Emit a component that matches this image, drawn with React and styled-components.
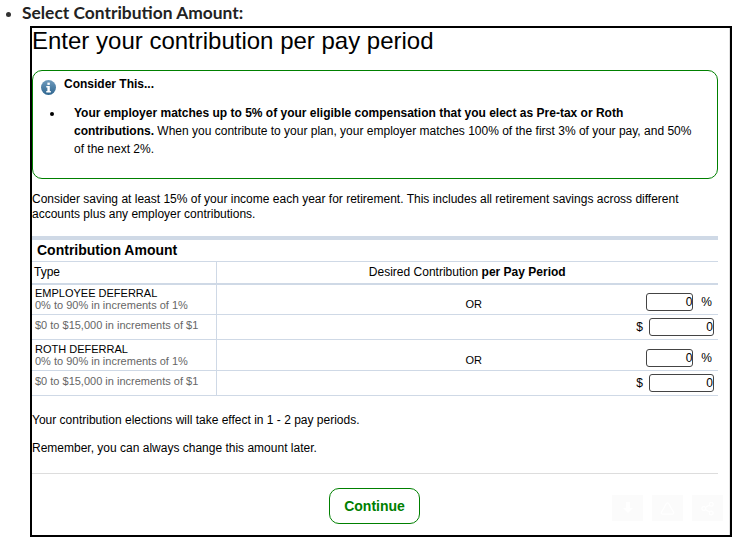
import React from 'react'
import styled, { createGlobalStyle } from 'styled-components'
import { Triangle, Share2 } from 'lucide-react'

const rows = [
    { name: 'EMPLOYEE DEFERRAL' },
    { name: 'ROTH DEFERRAL' },
]

const InfoIcon = () => (
    <svg width="15" height="15" viewBox="0 0 16 16">
        <defs>
            <linearGradient id="infoFill" x1="0" y1="0" x2="0" y2="1">
                <stop offset="0" stopColor="#6f9bbd" />
                <stop offset="1" stopColor="#2f6690" />
            </linearGradient>
        </defs>
        <circle cx="8" cy="8" r="8" fill="url(#infoFill)" />
        <rect x="6.8" y="2.8" width="2.6" height="2.4" fill="#fff" />
        <path d="M5.6 6.4h3.8v5.4h1.1v1.6H5.6v-1.6h1.2V8H5.6z" fill="#fff" />
    </svg>
)

const DownloadIcon = () => (
    <svg width="14" height="14" viewBox="0 0 14 14">
        <path d="M5 1h4v6h3l-5 5-5-5h3z" fill="#fff" />
    </svg>
)

const App = () => {
    return (
        <>
            <GlobalStyle />
            <Page>
                <Outer>
                    <OuterItem>
                        <Heading>Select Contribution Amount:</Heading>
                        <Frame>
                            <Title>Enter your contribution per pay period</Title>
                            <Notice>
                                <NoticeHead>
                                    <InfoIcon />
                                    <NoticeTitle>Consider This...</NoticeTitle>
                                </NoticeHead>
                                <NoticeItem>
                                    <Bullet />
                                    <div>
                                        <b>Your employer matches up to 5% of your eligible compensation that you elect as Pre-tax or Roth contributions.</b>{' '}
                                        When you contribute to your plan, your employer matches 100% of the first 3% of your pay, and 50% of the next 2%.
                                    </div>
                                </NoticeItem>
                            </Notice>
                            <Para $top={13}>Consider saving at least 15% of your income each year for retirement. This includes all retirement savings across different accounts plus any employer contributions.</Para>
                            <Table>
                                <colgroup>
                                    <col width="184" />
                                    <col />
                                </colgroup>
                                <thead>
                                    <tr>
                                        <Caption colSpan={2}>Contribution Amount</Caption>
                                    </tr>
                                    <HeadRow>
                                        <TypeHead>Type</TypeHead>
                                        <AmountHead>Desired Contribution <b>per Pay Period</b></AmountHead>
                                    </HeadRow>
                                </thead>
                                <tbody>
                                    {rows.map(row => (
                                        <React.Fragment key={row.name}>
                                            <PercentRow>
                                                <TypeCell>
                                                    <Name>{row.name}</Name>
                                                    <Hint>0% to 90% in increments of 1%</Hint>
                                                </TypeCell>
                                                <AmountCell>
                                                    <PercentLine>
                                                        <Or>OR</Or>
                                                        <Entry>
                                                            <Amount value="0" readOnly $w={47} />
                                                            <Unit $after>%</Unit>
                                                        </Entry>
                                                    </PercentLine>
                                                </AmountCell>
                                            </PercentRow>
                                            <DollarRow>
                                                <TypeCell>
                                                    <Hint $low>$0 to $15,000 in increments of $1</Hint>
                                                </TypeCell>
                                                <AmountCell>
                                                    <Entry $dollar>
                                                        <Unit>$</Unit>
                                                        <Amount value="0" readOnly $w={65} />
                                                    </Entry>
                                                </AmountCell>
                                            </DollarRow>
                                        </React.Fragment>
                                    ))}
                                </tbody>
                            </Table>
                            <Para $top={17}>Your contribution elections will take effect in 1 - 2 pay periods.</Para>
                            <Para $top={13}>Remember, you can always change this amount later.</Para>
                            <Footer>
                                <ContinueBtn>Continue</ContinueBtn>
                            </Footer>
                            <Overlay>
                                <OverlayBtn><DownloadIcon /></OverlayBtn>
                                <OverlayBtn><Triangle size={15} color="#fff" /></OverlayBtn>
                                <OverlayBtn><Share2 size={15} color="#fff" /></OverlayBtn>
                            </Overlay>
                        </Frame>
                    </OuterItem>
                </Outer>
            </Page>
        </>
    )
}

const GlobalStyle = createGlobalStyle`
    html, body {
        margin: 0;
        padding: 0;
        background: #fff;
    }
    body {
        font-family: "Liberation Sans", Arial, sans-serif;
        font-size: 12px;
        color: #000;
    }
`
const Page = styled.div`
    width: 745px;
    height: 549px;
    overflow: hidden;
`
const Outer = styled.ul`
    margin: 0;
    padding: 0 0 0 22px;
`
const OuterItem = styled.li`
    font-size: 16px;
    color: #333;
    &::marker {
        font-size: 16px;
    }
`
const Heading = styled.div`
    margin-bottom: 1px;
    font-family: Lato, "Open Sans", sans-serif;
    font-size: 17.4px;
    line-height: 25px;
    font-weight: 700;
    color: #222;
`
const Frame = styled.div`
    position: relative;
    box-sizing: border-box;
    width: 702px;
    height: 511px;
    margin-left: 8px;
    border: 2px solid #000;
    padding-right: 12px;
    box-shadow: inset -1px 0 0 #e2e2e2;
    font-family: "Liberation Sans", Arial, sans-serif;
    font-size: 12px;
    color: #000;
`
const Title = styled.h1`
    margin: 0;
    font-size: 24px;
    font-weight: 400;
    line-height: 26px;
`
const Notice = styled.div`
    box-sizing: border-box;
    height: 109px;
    margin-top: 16px;
    padding: 5px 15px 5px 8px;
    border: 1px solid #008000;
    border-radius: 10px;
`
const NoticeHead = styled.div`
    display: flex;
    gap: 8px;
    svg { margin-top: 4px; }
`
const NoticeTitle = styled.div`
    font-weight: 700;
    line-height: 16px;
`
const NoticeItem = styled.div`
    display: flex;
    align-items: flex-start;
    margin-top: 9px;
    padding-left: 9px;
    line-height: 18px;
`
const Bullet = styled.span`
    flex: none;
    width: 4px;
    height: 4px;
    margin: 8px 20px 0 0;
    border-radius: 50%;
    background: #000;
`
const Para = styled.p`
    margin: ${p => p.$top || 12}px 0 0;
    line-height: 15px;
`
const Table = styled.table`
    width: 100%;
    margin-top: 14px;
    border-collapse: collapse;
    table-layout: fixed;
    border-top: 4px solid #cfd9e6;
`
const Caption = styled.th`
    height: 19px;
    padding: 0 0 2px 5px;
    text-align: left;
    font-size: 14px;
    font-weight: 700;
`
const HeadRow = styled.tr`
    height: 22px;
    border-top: 1px solid #cfd9e6;
    border-bottom: 2px solid #cfd9e6;
`
const TypeHead = styled.th`
    padding: 0 0 0 2px;
    text-align: left;
    font-weight: 400;
    border-right: 1px solid #cfd9e6;
`
const AmountHead = styled.th`
    padding: 0;
    font-weight: 400;
    text-align: center;
`
const PercentRow = styled.tr`
    height: 31px;
    border-bottom: 1px solid #cfd9e6;
`
const DollarRow = styled.tr`
    height: 25px;
    border-bottom: 1px solid #cfd9e6;
`
const TypeCell = styled.td`
    padding: 0 0 0 3px;
    border-right: 1px solid #cfd9e6;
    font-size: 11px;
    line-height: 12px;
`
const AmountCell = styled.td`
    padding: 0;
`
const PercentLine = styled.div`
    display: flex;
    justify-content: space-between;
    align-items: center;
    padding-top: 5px;
`
const Name = styled.div`
    font-size: 11px;
    color: #000;
`
const Hint = styled.div`
    padding-bottom: ${p => (p.$low ? 5 : 0)}px;
    font-size: 11px;
    color: #666;
`
const Or = styled.span`
    margin: 5px 0 0 249px;
    font-size: 11px;
`
const Entry = styled.div`
    display: flex;
    justify-content: flex-end;
    align-items: center;
    gap: ${p => (p.$dollar ? 6 : 0)}px;
    padding-right: ${p => (p.$dollar ? 4 : 6)}px;
`
const Amount = styled.input`
    box-sizing: border-box;
    width: ${p => p.$w}px;
    height: 18px;
    padding: 0;
    border: 1px solid #444;
    border-radius: 3px;
    background: #fff;
    font-family: "Liberation Sans", Arial, sans-serif;
    font-size: 12px;
    text-align: right;
`
const Unit = styled.span`
    font-size: 12px;
    margin-left: ${p => (p.$after ? 8 : 0)}px;
`
const Footer = styled.div`
    margin-top: 17px;
    padding-top: 14px;
    border-top: 1px solid #ddd;
    text-align: center;
`
const ContinueBtn = styled.button`
    box-sizing: border-box;
    width: 91px;
    height: 36px;
    margin-right: 1px;
    background: #fff;
    border: 1px solid #008000;
    border-radius: 10px;
    color: #008000;
    font-family: "Liberation Sans", Arial, sans-serif;
    font-size: 14px;
    font-weight: 700;
`
const Overlay = styled.div`
    position: absolute;
    right: 7px;
    bottom: 14px;
    display: flex;
    gap: 9px;
`
const OverlayBtn = styled.div`
    display: flex;
    align-items: center;
    justify-content: center;
    width: 31px;
    height: 26px;
    background: #fbfbfb;
`

export default App
